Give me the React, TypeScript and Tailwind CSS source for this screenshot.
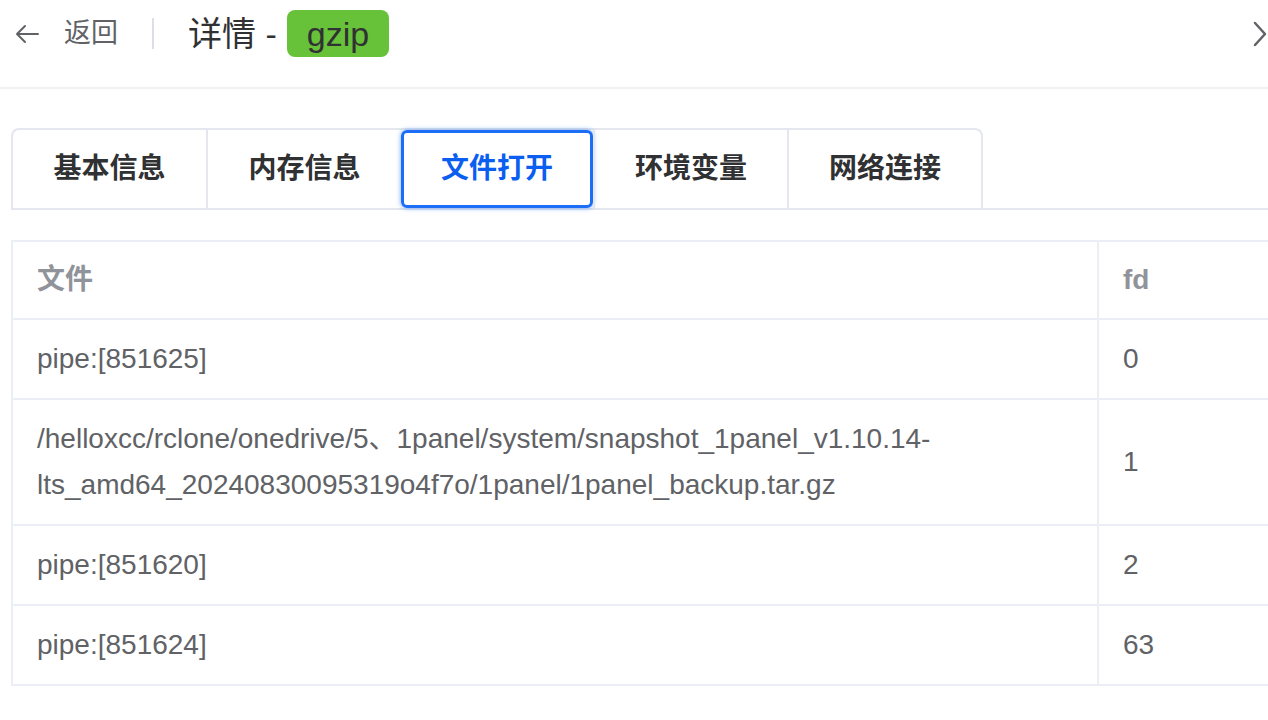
import { useState } from 'react';

const tabs = [
  { label: '基本信息', w: 'w-[193px]' },
  { label: '内存信息', w: 'w-[195px]' },
  { label: '文件打开', w: 'w-[192px]' },
  { label: '环境变量', w: 'w-[194px]' },
  { label: '网络连接', w: 'w-[194px]' },
];

const rows = [
  { file: 'pipe:[851625]', fd: '0' },
  {
    file: '/helloxcc/rclone/onedrive/5、1panel/system/snapshot_1panel_v1.10.14-lts_amd64_20240830095319o4f7o/1panel/1panel_backup.tar.gz',
    fd: '1',
  },
  { file: 'pipe:[851620]', fd: '2' },
  { file: 'pipe:[851624]', fd: '63' },
];

function App() {
  const [active, setActive] = useState(2);

  return (
    <div
      className="w-[1268px] h-[720px] overflow-hidden bg-white"
      style={{ fontFamily: '"Liberation Sans", "Noto Sans CJK SC", sans-serif' }}
    >
      {/* Header */}
      <header className="h-[89px] border-b-2 border-[#f0f1f3] pt-[10px] flex items-start">
        <div className="h-[47px] flex items-center w-full">
          <svg className="ml-[15px]" width="24" height="20" viewBox="0 0 24 20" fill="none">
            <path d="M23 10H2M10 2L2 10L10 18" stroke="#606266" strokeWidth="2" strokeLinecap="round" strokeLinejoin="round" />
          </svg>
          <span className="ml-[25px] text-[27px] text-[#606266] leading-none">返回</span>
          <div className="ml-[34px] w-[2px] h-[31px] bg-[#dcdfe6]" />
          <span className="ml-[34px] text-[34px] text-[#303133] leading-none">详情 -</span>
          <span className="ml-[10px] h-[47px] px-[20px] rounded-[8px] bg-[#67c23a] text-[34px] text-[#303133] flex items-center leading-none">
            gzip
          </span>
          <svg className="ml-auto mr-[1px]" width="14" height="26" viewBox="0 0 14 26" fill="none">
            <path d="M2 2L12 13L2 24" stroke="#606266" strokeWidth="2.5" strokeLinecap="round" strokeLinejoin="round" />
          </svg>
        </div>
      </header>

      {/* Tabs */}
      <div className="mt-[39px] ml-[11px] border-b-2 border-[#e4e7ed]">
        <div className="w-fit flex border-t-2 border-l-2 border-r-2 border-[#e4e7ed] rounded-t-[8px]">
          {tabs.map((t, i) => (
            <button
              key={t.label}
              onClick={() => setActive(i)}
              className={`relative ${t.w} h-[78px] flex items-center justify-center text-[28px] font-semibold ${
                i > 0 && i !== active ? 'border-l-2 border-[#e4e7ed]' : ''
              } ${i === active ? 'text-[#0a5ef0]' : 'text-[#303133]'}`}
            >
              {t.label}
              {i === active && (
                <span className="absolute inset-0 rounded-[6px] border-[3px] border-[#1b6ef5] shadow-[0_0_5px_rgba(27,110,245,0.6)]" />
              )}
            </button>
          ))}
        </div>
      </div>

      {/* Table */}
      <div className="mt-[30px] ml-[11px] w-[1300px] border-t-2 border-l-2 border-[#ebeef5]">
        <div className="flex border-b-2 border-[#ebeef5]">
          <div className="w-[1084px] px-[24px] py-[15px] text-[28px] leading-[46px] font-bold text-[#909399]">文件</div>
          <div className="flex-1 border-l-2 border-[#ebeef5] px-[24px] py-[15px] text-[28px] leading-[46px] font-bold text-[#909399]">
            fd
          </div>
        </div>
        {rows.map((r) => (
          <div key={r.fd} className="flex border-b-2 border-[#ebeef5]">
            <div className="w-[1084px] px-[24px] py-[16px] text-[28px] leading-[46px] text-[#606266] break-words">{r.file}</div>
            <div className="flex-1 border-l-2 border-[#ebeef5] px-[24px] py-[16px] text-[28px] leading-[46px] text-[#606266] flex items-center">
              {r.fd}
            </div>
          </div>
        ))}
      </div>
    </div>
  );
}

export default App;
